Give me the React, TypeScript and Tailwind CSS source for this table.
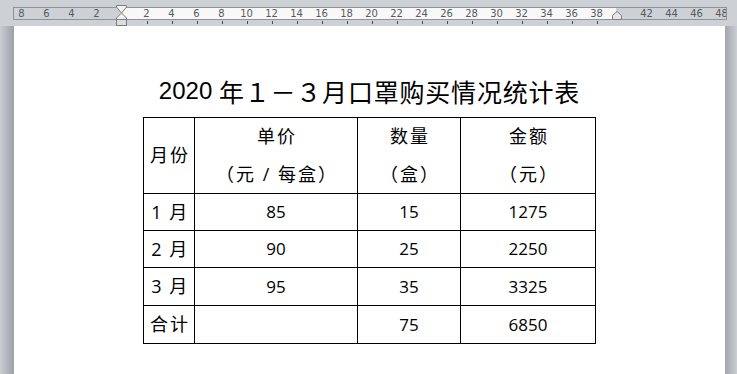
import React from "react";

const labels = [-8, -6, -4, -2, 0, 2, 4, 6, 8, 10, 12, 14, 16, 18, 20, 22, 24, 26, 28, 30, 32, 34, 36, 38, 40, 42, 44, 46, 48];
const ticks = [2, 4, 6, 8, 10, 12, 14, 16, 18, 20, 22, 24, 26, 28, 30, 32, 34, 36, 38];

const rows = [
  { m: "1 月", p: "85", q: "15", t: "1275", total: false },
  { m: "2 月", p: "90", q: "25", t: "2250", total: false },
  { m: "3 月", p: "95", q: "35", t: "3325", total: false },
  { m: "合计", p: "", q: "75", t: "6850", total: true },
];

const cell = "bg-white flex items-center justify-center";
const cjk = "bg-white flex items-center justify-center text-[18px] tracking-[2px] pl-[2px]";
const month = "bg-white flex items-center justify-center text-[18px] tracking-[1.5px] pl-[2px]";

export default function App() {
  return (
    <div
      className="w-[737px] h-[374px] overflow-hidden bg-[#cdd1d6] flex flex-col"
      style={{ fontFamily: '"Open Sans", "Noto Sans CJK SC", sans-serif' }}
    >
      {/* ruler area */}
      <div className="relative h-[26px] shrink-0 pt-[7px]">
        <div className="relative ml-[13px] w-[714px] h-[13px] border border-[#8e939a] flex overflow-hidden">
          <div className="w-[106px] bg-[#cdd1d6]" />
          <div className="w-[496px] bg-[#f8f8f8]" />
          <div className="flex-1 bg-[#cdd1d6]" />
          <div className="absolute left-[-5px] top-0 h-full flex">
            {labels.map((v) => (
              <div
                key={v}
                className="w-[25px] h-full flex items-center justify-center text-[10px] leading-none text-[#555a60]"
                style={{ fontFamily: '"DejaVu Sans", sans-serif' }}
              >
                {v === 0 || v === 40 ? "" : Math.abs(v)}
              </div>
            ))}
          </div>
        </div>
        <div className="absolute left-[135px] top-[21px] flex">
          {ticks.map((v) => (
            <div key={v} className="w-[25px] flex justify-center">
              <div className="w-px h-[3px] bg-[#4a4a4a]" />
            </div>
          ))}
        </div>
        <svg className="absolute left-[116px] top-[5px]" width="11" height="21" viewBox="0 0 11 21">
          <path d="M0.5 0.5 H10.5 V2 L5.5 8 L0.5 2 Z" fill="#f2f2f2" stroke="#7d7d7d" />
          <path d="M5.5 8 L10.5 13 V14.5 H0.5 V13 Z" fill="#f2f2f2" stroke="#7d7d7d" />
          <rect x="0.5" y="14.5" width="10" height="6" fill="#dcdcdc" stroke="#7d7d7d" />
        </svg>
        <svg className="absolute left-[612px] top-[11px]" width="10" height="9" viewBox="0 0 10 9">
          <path d="M0.5 8.5 V4.5 L5 0.5 L9.5 4.5 V8.5 Z" fill="#e6e6e6" stroke="#808080" />
        </svg>
      </div>

      {/* document area */}
      <div className="flex flex-1">
        <div className="w-[14px] bg-gradient-to-r from-[#cbcfd4] to-[#9ca0a7]" />
        <div className="w-[711px] bg-white flex flex-col items-center">
          <div className="mt-[50px] h-[30px] leading-[30px] flex items-center text-black whitespace-pre">
            <span className="text-[24px]" style={{ fontFamily: '"Liberation Sans", sans-serif' }}>
              2020{" "}
            </span>
            <span className="text-[25px] tracking-[0.8px]" style={{ fontFamily: '"Noto Sans CJK SC", sans-serif' }}>
              年１－３月口罩购买情况统计表
            </span>
          </div>
          <div className="mt-[11px] grid grid-cols-[50px_162px_102px_134px] grid-rows-[75px_36px_36px_37px_37px] gap-px bg-black p-px text-[17px] text-black">
            <div className={cjk}>月份</div>
            <div className="bg-white flex flex-col items-center text-[18px] tracking-[2px] pl-[2px]">
              <div className="h-[37px] flex items-center">单价</div>
              <div className="h-[38px] flex items-center">（元 / 每盒）</div>
            </div>
            <div className="bg-white flex flex-col items-center text-[18px] tracking-[2px] pl-[2px]">
              <div className="h-[37px] flex items-center">数量</div>
              <div className="h-[38px] flex items-center">（盒）</div>
            </div>
            <div className="bg-white flex flex-col items-center text-[18px] tracking-[2px] pl-[2px]">
              <div className="h-[37px] flex items-center">金额</div>
              <div className="h-[38px] flex items-center">（元）</div>
            </div>
            {rows.map((r) => (
              <React.Fragment key={r.m}>
                <div className={r.total ? cjk : month}>{r.m}</div>
                <div className={cell}>{r.p}</div>
                <div className={cell}>{r.q}</div>
                <div className={cell}>{r.t}</div>
              </React.Fragment>
            ))}
          </div>
        </div>
        <div className="flex-1 bg-gradient-to-r from-[#a3a7ad] to-[#cbcfd4]" />
      </div>
    </div>
  );
}
